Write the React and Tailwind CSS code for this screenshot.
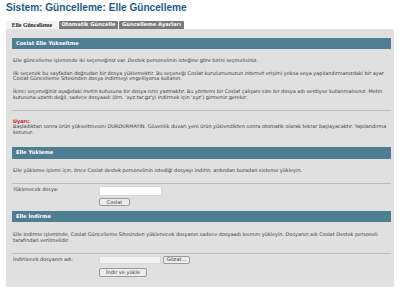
export default function App() {
  const body = 'text-[4.95px] leading-[5.7px] text-[#3a3a3a] whitespace-nowrap'
  const bar = 'h-[11px] bg-[#4f7d91] pl-[4px] flex items-center text-[5.2px] font-bold text-white'
  const btn = 'h-[8px] rounded-[2px] border border-[#9a9a9a] bg-[#ececec] px-[3px] text-[5px] leading-none text-[#333] flex items-center whitespace-nowrap'
  return (
    <div className="h-[293px] w-[400px] bg-white font-['DejaVu_Sans',sans-serif]">
      <h1 className="pl-[6px] pt-[2px] h-[21px] text-[10.1px] font-bold leading-[11px] text-[#1c5b89] font-['Liberation_Sans',sans-serif]">
        Sistem: Güncelleme: Elle Güncelleme
      </h1>
      <div className="flex h-[8px] pl-[6px] items-end gap-[1px]">
        <div className="h-[8px] w-[52px] bg-[#f2f2f2] rounded-t-[1px] flex items-center justify-center text-[5.8px] font-bold text-[#222] font-['Liberation_Serif',serif]">
          Elle Güncelleme
        </div>
        <div className="h-[8px] w-[59px] bg-[#7a7a7a] rounded-t-[1px] flex items-center justify-center text-[5.2px] font-bold text-white">
          Otomatik Güncelle
        </div>
        <div className="h-[8px] w-[65px] bg-[#7a7a7a] rounded-t-[1px] flex items-center justify-center text-[5.2px] font-bold text-white">
          Güncelleme Ayarları
        </div>
      </div>
      <div className="ml-[6px] w-[388px] h-[258px] rounded-[3px] rounded-tl-none bg-[#e0e0e0] pl-[6px] pr-[3px] pt-[9px]">
        <div className={bar}>Coslat Elle Yükseltme</div>
        <div className={`${body} pt-[9px] pl-[1px]`}>
          <p>Elle güncelleme işleminde iki seçeneğiniz var. Destek personelinin isteğine göre birini seçmelisiniz.</p>
          <p className="mt-[7px]">
            İlk seçenek bu sayfadan doğrudan bir dosya yüklemektir. Bu seçeneği Coslat kurulumunuzun internet erişimi yoksa veya yapılandırmanızdaki bir ayar
            <br />
            Coslat Güncelleme Sitesinden dosya indirmeyi engelliyorsa kullanın.
          </p>
          <p className="mt-[7px]">
            İkinci seçeneğiniz aşağıdaki metin kutusuna bir dosya ismi yazmaktır. Bu yöntemi bir Coslat çalışanı size bir dosya adı verdiyse kullanmalısınız. Metin
            <br />
            kutusuna uzantı değil, sadece dosyaadı (örn. 'xyz.tar.gz'yi indirmek için 'xyz') girmeniz gerekir.
          </p>
        </div>
        <div className="mt-[9px] h-px bg-[#bdbdbd]" />
        <div className={`${body} pt-[8px] pl-[1px]`}>
          <p className="font-bold text-[#cc1111]">Uyarı:</p>
          <p>
            Başladıktan sonra ürün yükseltmesini DURDURMAYIN. Güvenlik duvarı yeni ürün yüklendikten sonra otomatik olarak tekrar başlayacaktır. Yapılandırma
            <br />
            korunur.
          </p>
        </div>
        <div className={`${bar} mt-[11px] h-[12px]`}>Elle Yükleme</div>
        <div className={`${body} pt-[9px] pl-[1px]`}>
          <p>Elle yükleme işlemi için, önce Coslat destek personelinin istediği dosyayı indirin, ardından buradan sisteme yükleyin.</p>
        </div>
        <div className="mt-[10px] h-px bg-[#bdbdbd]" />
        <div className={`${body} flex pt-[2px] pl-[1px]`}>
          <span className="w-[86px] pt-[1px]">Yüklenecek dosya:</span>
          <div className="flex flex-col gap-[2px]">
            <div className="h-[10px] w-[63px] bg-white border border-[#d8d8d8]" />
            <button className={`${btn} w-[31px] justify-center`}>Coslat</button>
          </div>
        </div>
        <div className={`${bar} mt-[5px]`}>Elle İndirme</div>
        <div className={`${body} pt-[10px] pl-[1px]`}>
          <p>
            Elle indirme işleminde, Coslat Güncelleme Sitesinden yüklenecek dosyanın sadece dosyaadı kısmını yükleyin. Dosyanın adı Coslat Destek personeli
            <br />
            tarafından verilmelidir.
          </p>
        </div>
        <div className="mt-[9px] h-px bg-[#bdbdbd]" />
        <div className={`${body} flex pt-[2px] pl-[1px]`}>
          <span className="w-[86px] pt-[1px]">İndirilecek dosyanın adı:</span>
          <div className="flex flex-col gap-[4px]">
            <div className="flex gap-[2px]">
              <div className="h-[8px] w-[62px] bg-[#f2f2f2] border border-[#d8d8d8]" />
              <button className={`${btn} w-[27px] justify-center`}>Gözat...</button>
            </div>
            <button className={`${btn} h-[9px] w-[48px] justify-center`}>İndir ve yükle</button>
          </div>
        </div>
      </div>
    </div>
  )
}
